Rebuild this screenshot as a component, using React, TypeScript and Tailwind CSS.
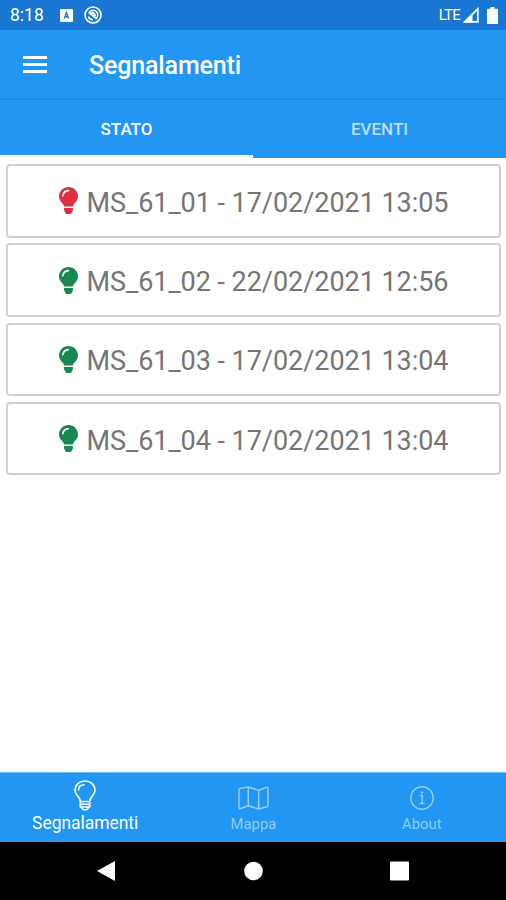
type Light = { id: string; name: string; date: string; status: 'fault' | 'ok' }

const LIGHTS: Light[] = [
  { id: '1', name: 'MS_61_01', date: '17/02/2021 13:05', status: 'fault' },
  { id: '2', name: 'MS_61_02', date: '22/02/2021 12:56', status: 'ok' },
  { id: '3', name: 'MS_61_03', date: '17/02/2021 13:04', status: 'ok' },
  { id: '4', name: 'MS_61_04', date: '17/02/2021 13:04', status: 'ok' },
]

const STATUS_STYLES: Record<Light['status'], string> = {
  fault: 'text-[#dc3043]',
  ok:    'text-[#168850]',
}

function Bulb({ className }: { className: string }) {
  return (
    <svg viewBox="0 0 19 27" className={`w-[19px] h-[27px] shrink-0 ${className}`} fill="currentColor">
      <path d="M9.5 0C4.2 0 0 4.2 0 9.4c0 3.2 1.800 5 3.300 6.800 1 1.200 1.500 2 1.800 3.200h8.800c.3-1.200.8-2 1.800-3.200 1.500-1.800 3.300-3.600 3.300-6.800C19 4.200 14.800 0 9.500 0Z" />
      <path d="M5.100 21h8.800v2.600c0 .4-.3.700-.7.900l-.7 1.700c-.2.500-.6.800-1.100.8H7.600c-.5 0-.9-.3-1.100-.8l-.7-1.700c-.4-.2-.7-.5-.7-.9Z" />
      <path d="M3.900 8.600C4.300 6 6.200 4 9.300 3.700" fill="none" stroke="white" strokeWidth="1.700" strokeLinecap="round" />
    </svg>
  )
}

function StatusBar() {
  return (
    <div className="h-[30px] bg-[#1976d2] flex items-center pl-[10px] pr-[8px] text-white">
      <span className="w-[50px] text-[17.500px] leading-none pt-[2px]">8:18</span>
      <svg viewBox="0 0 13 13" className="w-[13px] h-[13px]">
        <rect width="13" height="13" rx="1" fill="white" />
        <path d="M4.300 9.500 6.500 3.500 8.700 9.500M5 7.700h3" fill="none" stroke="#1976d2" strokeWidth="1.400" />
      </svg>
      <svg viewBox="0 0 18 18" className="w-[18px] h-[18px] ml-[11px]" fill="none" stroke="white">
        <circle cx="9" cy="9" r="8" strokeWidth="1.600" />
        <path d="M4.600 7.500A4.800 4.800 0 0 1 12.600 5.800C14.600 8 14 11.500 11.700 13M4.300 10.500A4.800 4.800 0 0 0 9 13.700" strokeWidth="1.600" />
        <path d="M5.500 7 12.500 12.500M7 7.500c2-1.500 4 0 4 2.500" strokeWidth="2" />
      </svg>
      <span className="ml-auto text-[15px] leading-none tracking-[-0.8px] pt-[1px]">LTE</span>
      <svg viewBox="0 0 16 16" className="w-4 h-4 ml-[3px]">
        <path d="M1.800 14.800 14.800 1.800v13Z" fill="none" stroke="white" strokeWidth="1.700" />
        <path d="M0 15.500 9.500 6v9.500Z" fill="white" />
      </svg>
      <svg viewBox="0 0 11 17" className="w-[11px] h-[17px] ml-[8px]" fill="white">
        <path d="M3.500 0h4v1.700H10c.6 0 1 .4 1 1V16c0 .6-.4 1-1 1H1c-.6 0-1-.4-1-1V2.700c0-.6.400-1 1-1h2.500Z" />
      </svg>
    </div>
  )
}

function BottomTabs() {
  return (
    <nav className="h-[70px] bg-[#2196f3] border-t border-[#6fb9f5] grid grid-cols-3 pl-[1px] text-white">
      <div className="flex flex-col items-center">
        <svg viewBox="0 0 22 31" className="w-[22px] h-[31px] mt-[7px]" fill="none" stroke="currentColor" strokeWidth="1.600" strokeLinejoin="round">
          <path d="M6.300 21.500C6.300 16.500 1 15.500 1 10.500 1 5 5.300 1 11 1s10 4 10 9.500c0 5-5.300 6-5.300 11ZM6.300 21.500v5.500h9.400v-5.500M6.500 24.200h9M7.600 27c.2 1.800 1.200 2.700 2.400 2.700h2c1.200 0 2.200-.9 2.400-2.700" />
          <path d="M4.500 10c0-3.200 2.200-5.300 5.500-5.300" strokeLinecap="round" />
        </svg>
        <span className="text-[17.500px] leading-5 mt-[2px] tracking-[-0.050px]">Segnalamenti</span>
      </div>
      <div className="flex flex-col items-center text-[#93cdfa]">
        <svg viewBox="0 0 31 24" className="w-[31px] h-6 mt-[13px]" fill="none" stroke="currentColor" strokeWidth="1.500" strokeLinejoin="round">
          <path d="M1 3.800c0-.7.300-1.100 1-1.300L10.300 1l10.400 3.200L29 1.300c.6-.2 1 .1 1 .7v17.500c0 .7-.3 1.100-1 1.300L20.700 23l-10.400-3.200L2 22.700c-.6.200-1-.1-1-.8ZM10.300 1v18.800M20.700 4.200V23" />
        </svg>
        <span className="text-[14.700px] leading-5 mt-[4px] tracking-[0.1px]">Mappa</span>
      </div>
      <div className="flex flex-col items-center text-[#93cdfa]">
        <svg viewBox="0 0 24 24" className="w-6 h-6 mt-[13px]" fill="none" stroke="currentColor" strokeWidth="1.400">
          <circle cx="12" cy="12" r="11.200" />
          <path d="M9.800 9.500h2.400V17.500M9.600 17.500h5" strokeWidth="1.700" />
          <circle cx="12" cy="6.700" r="1.200" fill="currentColor" stroke="none" />
        </svg>
        <span className="text-[14.700px] leading-5 mt-[4px] tracking-[0.1px]">About</span>
      </div>
    </nav>
  )
}

export default function App() {
  return (
    <div className="w-full h-screen flex flex-col bg-white font-[Roboto,sans-serif] overflow-hidden">
      <StatusBar />

      {/* Header */}
      <header className="h-[70px] bg-[#2196f3] border-b-2 border-[#1e8be5] flex items-center pl-[23px] text-white">
        <div className="w-6 flex flex-col gap-[4px]">
          <div className="h-[3px] bg-white" />
          <div className="h-[3px] bg-white" />
          <div className="h-[3px] bg-white" />
        </div>
        <h1 className="ml-[42px] text-[25px] leading-none font-medium tracking-[-0.150px] mt-[3px]">Segnalamenti</h1>
      </header>

      {/* Top tabs */}
      <div className="h-[58px] bg-[#2196f3] grid grid-cols-2 text-[17px] font-medium text-center leading-[58px]">
        <div className="border-b-3 border-white text-white h-[58px]">STATO</div>
        <div className="text-[#bcdffb] h-[58px]">EVENTI</div>
      </div>

      {/* Lights */}
      <main className="flex-1 pt-[6px] pl-[6px] pr-[5px] flex flex-col gap-[5.800px]">
        {LIGHTS.map(light => (
          <div
            key={light.id}
            className="h-[73.500px] border-2 border-[#d0d0d0] rounded-[4px] flex items-center justify-center gap-[9px]"
          >
            <Bulb className={STATUS_STYLES[light.status]} />
            <span className="text-[27px] leading-none tracking-[-0.050px] text-[#757575] whitespace-nowrap mt-[5px]">
              {light.name} - {light.date}
            </span>
          </div>
        ))}
      </main>

      <BottomTabs />

      {/* Android navigation */}
      <div className="h-[58px] bg-black flex items-center">
        <svg viewBox="0 0 506 58" className="w-full h-[58px]" fill="white">
          <path d="M97 29 115 19v20Z" />
          <circle cx="253.500" cy="29" r="9.300" />
          <rect x="390" y="19.500" width="19" height="19" rx="1" />
        </svg>
      </div>
    </div>
  )
}
